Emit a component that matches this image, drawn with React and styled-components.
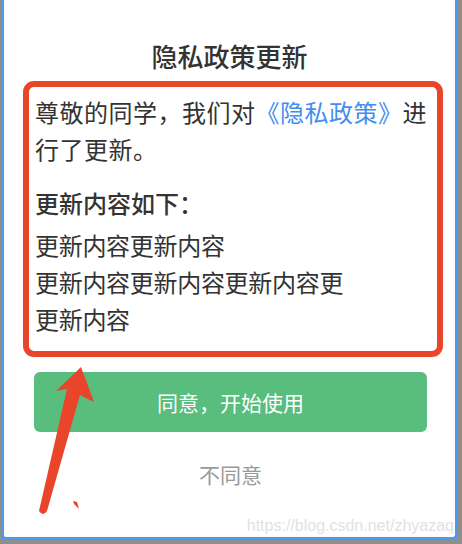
import React from "react";
import styled, { createGlobalStyle } from "styled-components";

const GlobalStyle = createGlobalStyle`
  html, body { margin: 0; padding: 0; background: #8e8e8e; }
  body { font-family: "Noto Sans CJK SC", "Noto Sans", sans-serif; }
  #root { width: 462px; height: 544px; overflow: hidden; position: relative; }
`;

const Page = styled.div`
  position: relative;
  width: 462px;
  height: 544px;
  background: #8e8e8e;
  box-sizing: border-box;
  padding-left: 1px;
`;

const Window = styled.div`
  width: 457px;
  height: 540px;
  box-sizing: border-box;
  background: #fff;
  border: 3px solid #4d9be8;
  border-top: none;
  border-radius: 0 0 5px 5px;
  display: flex;
  flex-direction: column;
  align-items: stretch;
  padding-top: 38px;
`;

const Title = styled.h1`
  margin: 0;
  text-align: center;
  font-size: 26px;
  line-height: 36px;
  font-weight: 500;
  color: #333;
`;

const Highlight = styled.div`
  margin: 7px 12px 0 19px;
  border: 6px solid #e9452b;
  border-radius: 11px;
  padding: 6px 6px 14px 6px;
  color: #333;
  font-size: 24px;
  line-height: 37px;
`;

const Para = styled.p`
  margin: 0;
  letter-spacing: 0.5px;
`;

const Link = styled.span`
  color: #3f8ef0;
`;

const Heading = styled.p`
  margin: 17px 0 5px;
  font-weight: 500;
`;

const Item = styled.div`
  letter-spacing: -0.3px;
`;

const Actions = styled.div`
  display: flex;
  flex-direction: column;
  align-items: center;
  padding: 15px 28px 0 30px;
`;

const Primary = styled.button`
  width: 100%;
  height: 60px;
  border: none;
  border-radius: 6px;
  background: #58bd7d;
  color: #fff;
  font-family: inherit;
  font-size: 21px;
  cursor: pointer;
`;

const Secondary = styled.button`
  margin-top: 24px;
  border: none;
  background: none;
  color: #999;
  font-family: inherit;
  font-size: 21px;
  line-height: 36px;
  padding: 0;
`;

const Watermark = styled.span`
  position: absolute;
  right: 8px;
  bottom: 9px;
  font-family: "Liberation Sans", Arial, sans-serif;
  font-size: 16px;
  color: #e2e2e2;
  pointer-events: none;
`;

const Overlay = styled.svg`
  position: absolute;
  left: 0;
  top: 0;
  pointer-events: none;
`;

export default function App() {
  return (
    <>
      <GlobalStyle />
      <Page>
        <Window>
          <Title>隐私政策更新</Title>
          <Highlight>
            <Para>
              尊敬的同学，我们对<Link>《隐私政策》</Link>进行了更新。
            </Para>
            <Heading>更新内容如下：</Heading>
            <Item>更新内容更新内容</Item>
            <Item>更新内容更新内容更新内容更</Item>
            <Item>更新内容</Item>
          </Highlight>
          <Actions>
            <Primary>同意，开始使用</Primary>
            <Secondary>不同意</Secondary>
          </Actions>
        </Window>
        <Watermark>https://blog.csdn.net/zhyazaq</Watermark>
        <Overlay width="462" height="544" viewBox="0 0 462 544">
          <path
            d="M81 367 L94 402 L80 395 L47 511 Q43 517 39 511 L67 389 L56 391 Z"
            fill="#e9452b"
          />
          <path d="M73 501 L77 502 L79 509 L74 504 Z" fill="#e9452b" />
        </Overlay>
      </Page>
    </>
  );
}
